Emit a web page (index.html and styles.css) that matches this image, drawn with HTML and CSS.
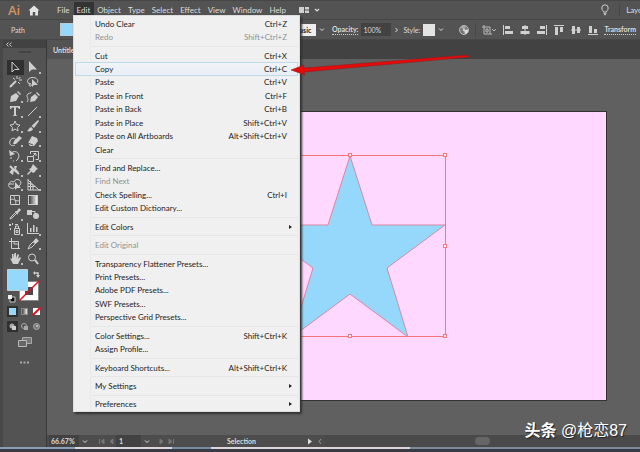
FILE: index.html
```html
<!DOCTYPE html>
<html lang="en">
  <head>
    <meta charset="UTF-8" />
    <meta name="viewport" content="width=device-width, initial-scale=1.0" />
    <title>Illustrator</title>
    <link rel="stylesheet" href="styles.css">
  </head>
  <body>
    <div class="app">
      <header class="titlebar">
        <span class="logo">Ai</span>
        <button class="home" aria-label="Home">
          <svg width="12" height="11" viewBox="0 0 12 11"><path d="M6 0.5L0.5 5.5H2V10.5H4.8V7H7.2V10.5H10V5.5H11.5Z" fill="#e4e4e4"/></svg>
        </button>
        <nav class="menubar">
          <button>File</button>
          <button class="open">Edit</button>
          <button>Object</button>
          <button>Type</button>
          <button>Select</button>
          <button>Effect</button>
          <button>View</button>
          <button>Window</button>
          <button>Help</button>
        </nav>
        <button class="arrange" aria-label="Arrange documents">
          <svg width="22" height="8" viewBox="0 0 22 8"><path d="M0 1H5V7H0ZM6 1H10V3.5H6ZM6 4.5H10V7H6Z" fill="#d0d0d0"/><path d="M16 3L18 5L20 3" fill="none" stroke="#ddd" stroke-width="1.2"/></svg>
        </button>
        <div class="title-right">
          <button aria-label="Learn">
            <svg width="10" height="12" viewBox="0 0 10 12"><path d="M3.5 8C3.5 6.7 1.8 6 1.8 4A3.2 3.2 0 0 1 8.2 4C8.2 6 6.5 6.7 6.5 8ZM3.5 9.3H6.5M4 10.7H6" fill="none" stroke="#ccc"/></svg>
          </button>
          <button class="layout">Layout</button>
        </div>
      </header>

      <section class="control">
        <span class="kind">Path</span>
        <button class="fill-color" aria-label="Fill"></button>
        <div class="options">
          <select class="brush" aria-label="Brush"><option>Basic</option></select>
          <svg class="chev" width="6" height="5" viewBox="0 0 6 5"><path d="M1 1.5L3 3.5L5 1.5"/></svg>
          <label class="link" for="opacity">Opacity:</label>
          <input id="opacity" value="100%">
          <svg class="chev right" width="5" height="6" viewBox="0 0 5 6"><path d="M1.5 1L3.5 3L1.5 5"/></svg>
          <span class="style-label">Style:</span>
          <button class="style-box" aria-label="Style"></button>
          <svg class="chev" width="6" height="5" viewBox="0 0 6 5"><path d="M1 1.5L3 3.5L5 1.5"/></svg>
        </div>
        <div class="align">
          <button aria-label="Recolor"><svg width="12" height="12" viewBox="0 0 12 12"><circle cx="6" cy="6" r="4.5" fill="#777" stroke="#bbb"/><path d="M6 6L2.5 3A4.5 4.5 0 0 1 8 2Z" fill="#aaa"/><path d="M6 6L10 5.5A4 4 0 0 1 7 10Z" fill="#ddd"/><circle cx="6" cy="6" r="1.2" fill="#ccc"/></svg></button>
          <i class="divider"></i>
          <button aria-label="Align to"><svg width="16" height="12" viewBox="0 0 16 12"><path d="M3 1V10H11M1 3H9V10M5 5H7V8H5Z" fill="none" stroke="#bbb"/><path d="M11 5L13 7L15 5" fill="none" stroke="#bbb"/></svg></button>
          <button aria-label="Align left"><svg width="12" height="12" viewBox="0 0 12 12"><path d="M1 1H2V11H1ZM3 2H8V5H3ZM3 7H11V10H3Z"/></svg></button>
          <button aria-label="Align center"><svg width="12" height="12" viewBox="0 0 12 12"><path d="M5.5 1H6.5V11H5.5ZM3 2H9V5H3ZM1.500 7H10.500V10H1.500Z"/></svg></button>
          <button aria-label="Align right"><svg width="12" height="12" viewBox="0 0 12 12"><path d="M10 1H11V11H10ZM4 2H9V5H4ZM1 7H9V10H1Z"/></svg></button>
          <button aria-label="Align top"><svg width="12" height="12" viewBox="0 0 12 12"><path d="M1 1H11V2H1ZM2 3H5V11H2ZM7 3H10V8H7Z"/></svg></button>
          <button aria-label="Align middle"><svg width="12" height="12" viewBox="0 0 12 12"><path d="M1 5.500H11V6.500H1ZM2 2H5V10H2ZM7 3H10V9H7Z"/></svg></button>
          <button aria-label="Align bottom"><svg width="12" height="12" viewBox="0 0 12 12"><path d="M1 10H11V11H1ZM2 2H5V9H2ZM7 5H10V9H7Z"/></svg></button>
          <button class="link">Transform</button>
        </div>
      </section>

      <main class="workspace">
        <aside class="tools">
          <div class="tools-head"><svg width="6" height="5" viewBox="0 0 6 5"><path d="M2.5 0.500L0.500 2.500L2.500 4.500M5.500 0.500L3.500 2.500L5.500 4.500" fill="none" stroke="#ccc"/></svg></div>
          <div class="grip"></div>
          <div class="tool-grid">
            <button class="active" aria-label="Selection"><svg viewBox="0 0 16 14"><path class="line" d="M5 2V12L7.500 9.500H12Z"/></svg></button>
            <button class="more" aria-label="Direct selection"><svg viewBox="0 0 16 14"><path d="M4 1V12L7 9.500H12Z"/></svg></button>
            <button aria-label="Magic wand"><svg viewBox="0 0 16 14"><path class="line bold" d="M3 12L9 6"/><path class="line" d="M10 1V4M12 5H15M11.500 4L13.500 2M6 3L8 4.500M11 7L13 9"/></svg></button>
            <button aria-label="Lasso"><svg viewBox="0 0 16 14"><path class="line" d="M5 9C1 8 2 3 7 2.500C12 2 14 6 12 8M5 9C3 10 5 12 6 11C7 9 4 7 4 9"/><path d="M7 4V12L9 10H13Z"/></svg></button>
            <button class="more" aria-label="Pen"><svg viewBox="0 0 16 14"><path d="M3 12L4 6L9 3L12 6L9 11ZM10 2L11 1L14 4L13 5Z"/></svg></button>
            <button aria-label="Curvature"><svg viewBox="0 0 16 14"><path d="M5 12L6 7L10 4L13 7L10 11ZM11 3L12 2L15 5L14 6Z"/><path class="line" d="M2 12C5 9 0 6 3 4S6 4 6 2"/></svg></button>
            <button class="more" aria-label="Type"><svg viewBox="0 0 16 14"><path d="M3 2H13V5H12L11 3.500H9V11L10.500 12H5.500L7 11V3.500H5L4 5H3Z"/></svg></button>
            <button class="more" aria-label="Line"><svg viewBox="0 0 16 14"><path class="line" d="M3 12L12 3"/></svg></button>
            <button class="more" aria-label="Star"><svg viewBox="0 0 16 14"><path class="line" d="M8 2L9.500 5.500L13 6L10.500 8.500L11 12L8 10L5 12L5.500 8.500L3 6L6.500 5.500Z"/></svg></button>
            <button class="more" aria-label="Paintbrush"><svg viewBox="0 0 16 14"><path d="M13 1L14 2L9 9L6.500 7ZM6 8L8 10C7 12 5 13 2 12C4 11 3.500 9 6 8Z"/></svg></button>
            <button class="more" aria-label="Shaper"><svg viewBox="0 0 16 14"><path class="line" d="M8 11C4 13 2 10 3 7S8 3 9 6"/><path d="M6 10L7 7L12 2L15 4L9 10Z"/></svg></button>
            <button class="more" aria-label="Eraser"><svg viewBox="0 0 16 14"><path d="M3 9L7 2L12 4L13 7L9 12L5 12Z"/><path d="M3 9L8 11" stroke="#535353"/></svg></button>
            <button class="more" aria-label="Rotate"><svg viewBox="0 0 16 14"><path class="line" d="M4 4C9 0 14 5 11 10L9 12M4 8V10M6 12H7"/><path d="M2 1L3 7L8 5Z"/></svg></button>
            <button class="more" aria-label="Scale"><svg viewBox="0 0 16 14"><path class="line" d="M2.500 7.500H8.500V12.500H2.500ZM5.500 5V2.500H13.500V10.500H10.500M8 7L11 4M8.500 4.500H11V7"/></svg></button>
            <button class="more" aria-label="Width"><svg viewBox="0 0 16 14"><path class="line bold" d="M3 3L6 6L4 9M6 6L12 11"/><path d="M2 9L7 7L6 12ZM7 3H10L9 6L12 9L8 8Z"/></svg></button>
            <button class="more" aria-label="Puppet warp"><svg viewBox="0 0 16 14"><path d="M8 1L13 6L11 7L10 9L8 10L6.500 8.500L3 12L2 11L5.500 7.500L4 6L6 5Z"/></svg></button>
            <button class="more" aria-label="Shape builder"><svg viewBox="0 0 16 14"><path class="line" d="M8 9A3.500 3.500 0 1 1 7 4A3.500 3.500 0 1 1 12 8M2 6H7"/><path d="M8 4V12L10 10H14Z"/></svg></button>
            <button class="more" aria-label="Perspective grid"><svg viewBox="0 0 16 14"><path class="line" d="M3 1V12H14L3 2M3 5L8 7V12M3 8.500H10M5.500 3V12"/></svg></button>
            <button aria-label="Mesh"><svg viewBox="0 0 16 14"><path class="line" d="M3.500 2.500H12.500V11.500H3.500ZM3 7C6 4 9 10 13 7M8 2C5 5 11 8 8 12"/></svg></button>
            <button aria-label="Gradient"><svg viewBox="0 0 16 14"><defs><linearGradient id="ramp"><stop stop-color="#333"/><stop offset="1" stop-color="#fff"/></linearGradient></defs><rect x="3.500" y="2.500" width="9" height="9" fill="url(#ramp)" stroke="#ccc"/></svg></button>
            <button class="more" aria-label="Eyedropper"><svg viewBox="0 0 16 14"><path class="line" d="M9 5L4 10L3 12L5 11L10 6"/><path d="M8 4L10 4L12 1L14 3L11 6L11 8Z"/></svg></button>
            <button aria-label="Blend"><svg viewBox="0 0 16 14"><path d="M2 3H7V8H2Z"/><circle cx="11" cy="9" r="3"/><path class="line" d="M6.500 4.500H10V7"/></svg></button>
            <button class="more" aria-label="Symbol sprayer"><svg viewBox="0 0 16 14"><path class="line" d="M7.500 6.500H12.500V12.500H7.500ZM8.500 6V4H11.500V6M9 8.500H11V10.500H9Z"/><path d="M2 2H4V4H2ZM5 1H6V3H5ZM3 6H4V8H3ZM8 2H11V3H8Z"/></svg></button>
            <button class="more" aria-label="Graph"><svg viewBox="0 0 16 14"><path d="M2 1H3V11H14V12H2ZM5 6H6.500V10H5ZM8 3H9.500V10H8ZM11 5H12.500V10H11Z"/></svg></button>
            <button aria-label="Artboard"><svg viewBox="0 0 16 14"><path class="line" d="M4.500 1V11.500H13M2 4.500H11.500V11M7 4V7H12"/></svg></button>
            <button class="more" aria-label="Slice"><svg viewBox="0 0 16 14"><path class="line" d="M3 12L5 8L11 2L13 4L7 10Z"/><path d="M8 5L11 1L14 4L10 7Z"/></svg></button>
            <button class="more" aria-label="Hand"><svg viewBox="0 0 16 14"><path d="M3 6L5 7L5 2H6.500V6L7.500 1H9L9 6L10.500 2L12 3L11 7L13 5L14 6L11 12H6Z"/></svg></button>
            <button aria-label="Zoom"><svg viewBox="0 0 16 14"><circle class="line" cx="7" cy="5.500" r="3.500"/><path class="line bold" d="M10 8L13 12"/></svg></button>
          </div>
          <svg class="swatches" width="36" height="36" viewBox="0 0 36 36">
            <path d="M27 5H31V8" fill="none" stroke="#ccc" stroke-width="1.500"/><path d="M29 7H33L31 10ZM28 3V7L26 5Z" fill="#ccc"/>
            <path d="M12.500 13.500H31.500V32.500H12.500Z" fill="#fff" stroke="#888"/><path d="M18 19H26V27H18Z" fill="#484848"/>
            <path d="M12 33L32 13" stroke="#e01020" stroke-width="1.500"/>
            <path d="M0.500 1.500H20.500V22.500H0.500Z" fill="#96d8fc" stroke="#c2cdd4"/>
            <path d="M3 29H8V34H3Z" fill="#111" stroke="#ccc"/><path d="M1 27H5V31H1Z" fill="#eee"/>
          </svg>
          <div class="modes">
            <button class="active" aria-label="Color"><svg width="9" height="9" viewBox="0 0 9 9"><rect x="1" y="1" width="7" height="7" fill="#96d8fc"/></svg></button>
            <button aria-label="Gradient"><svg width="9" height="9" viewBox="0 0 9 9"><rect x="1.500" y="1.500" width="6" height="6" fill="url(#ramp)" stroke="#888"/></svg></button>
            <button aria-label="None"><svg width="9" height="9" viewBox="0 0 9 9"><path d="M1 1H8V8H1Z" fill="#fff"/><path d="M0.500 8.500L8.500 0.500" stroke="#e01020" stroke-width="2"/></svg></button>
            <button class="active" aria-label="Draw normal"><svg width="9" height="9" viewBox="0 0 9 9"><circle cx="4" cy="4" r="2.500" fill="#aaa"/><path d="M4 4H8V8H4Z" fill="#ccc"/></svg></button>
            <button aria-label="Draw behind"><svg width="9" height="9" viewBox="0 0 9 9"><circle cx="4" cy="4" r="2.500" fill="none" stroke="#aaa"/><path d="M4 4H8V8H4Z" fill="#aaa"/></svg></button>
            <button aria-label="Draw inside"><svg width="9" height="9" viewBox="0 0 9 9"><circle cx="4.500" cy="4.500" r="3" fill="#777" stroke="#aaa"/><path d="M4 3H6V5H4Z" fill="#bbb"/></svg></button>
          </div>
          <button class="screen-mode" aria-label="Screen mode"><svg width="16" height="12" viewBox="0 0 16 12"><path d="M5.500 1.500H14.500V7.500H5.500Z" fill="#777" stroke="#aaa"/><path d="M1.500 4.500H9.500V10.500H1.500Z" fill="#666" stroke="#bbb"/></svg></button>
          <button class="edit-tools" aria-label="Edit toolbar"><svg width="9" height="3" viewBox="0 0 9 3"><path d="M0 0.500H2V2.500H0ZM3.500 0.500H5.500V2.500H3.500ZM7 0.500H9V2.500H7Z" fill="#aaa"/></svg></button>
        </aside>

        <div class="document">
          <div class="tabs"><button class="tab">Untitled</button></div>
          <div class="canvas">
            <svg class="artboard" viewBox="47 59 593 376" preserveAspectRatio="xMinYMin meet">
              <rect x="92.500" y="111.500" width="514" height="289" fill="#fed8fe" stroke="#333"/>
              <path d="M350 156L372 225H445L387 268L408 337L350 294L292 337L313 268L255 225H328Z" fill="#96d8fc" stroke="#d8899f"/>
              <path d="M254.500 155.500H445.500V336.500H254.500Z" fill="none" stroke="#f9747c"/>
              <g fill="#fff" stroke="#f9747c">
                <rect x="348.500" y="153.500" width="3" height="3"/><rect x="443.500" y="153.500" width="3" height="3"/>
                <rect x="443.500" y="244.500" width="3" height="3"/><rect x="443.500" y="334.500" width="3" height="3"/>
                <rect x="348.500" y="334.500" width="3" height="3"/>
              </g>
            </svg>
          </div>
          <footer class="status">
            <select class="zoom" aria-label="Zoom"><option>66.67%</option></select>
            <svg class="chev" width="6" height="5" viewBox="0 0 6 5"><path d="M1 1.500L3 3.500L5 1.500"/></svg>
            <svg class="pager" width="16" height="7" viewBox="0 0 16 7"><path d="M1.500 1V6M6 1L3 3.500L6 6ZM15 1L12 3.500L15 6Z"/></svg>
            <input class="page" value="1" aria-label="Artboard">
            <svg class="chev" width="6" height="5" viewBox="0 0 6 5"><path d="M1 1.500L3 3.500L5 1.500"/></svg>
            <svg class="pager" width="16" height="7" viewBox="0 0 16 7"><path d="M1 1L4 3.500L1 6ZM10 1L13 3.500L10 6ZM14.500 1V6"/></svg>
            <span class="tool-name">Selection</span>
            <svg width="16" height="7" viewBox="0 0 16 7"><path d="M1 0.500L5 3.500L1 6.500Z" fill="#ddd"/><path d="M14 1L12 3.500L14 6" fill="none" stroke="#999"/></svg>
            <div class="scrollbar"><span class="thumb"></span></div>
          </footer>
        </div>
      </main>
      <div class="taskbar"></div>

      <ul class="dropdown">
        <li><button>Undo Clear<kbd>Ctrl+Z</kbd></button></li>
        <li><button disabled>Redo<kbd>Shift+Ctrl+Z</kbd></button></li>
        <li class="sep"></li>
        <li><button>Cut<kbd>Ctrl+X</kbd></button></li>
        <li><button class="hover">Copy<kbd>Ctrl+C</kbd></button></li>
        <li><button>Paste<kbd>Ctrl+V</kbd></button></li>
        <li><button>Paste in Front<kbd>Ctrl+F</kbd></button></li>
        <li><button>Paste in Back<kbd>Ctrl+B</kbd></button></li>
        <li><button>Paste in Place<kbd>Shift+Ctrl+V</kbd></button></li>
        <li><button>Paste on All Artboards<kbd>Alt+Shift+Ctrl+V</kbd></button></li>
        <li><button>Clear</button></li>
        <li class="sep"></li>
        <li><button>Find and Replace...</button></li>
        <li><button disabled>Find Next</button></li>
        <li><button>Check Spelling...<kbd>Ctrl+I</kbd></button></li>
        <li><button>Edit Custom Dictionary...</button></li>
        <li class="sep"></li>
        <li><button class="sub">Edit Colors</button></li>
        <li class="sep"></li>
        <li><button disabled>Edit Original</button></li>
        <li class="sep"></li>
        <li><button>Transparency Flattener Presets...</button></li>
        <li><button>Print Presets...</button></li>
        <li><button>Adobe PDF Presets...</button></li>
        <li><button>SWF Presets...</button></li>
        <li><button>Perspective Grid Presets...</button></li>
        <li class="sep"></li>
        <li><button>Color Settings...<kbd>Shift+Ctrl+K</kbd></button></li>
        <li><button>Assign Profile...</button></li>
        <li class="sep"></li>
        <li><button>Keyboard Shortcuts...<kbd>Alt+Shift+Ctrl+K</kbd></button></li>
        <li class="sep"></li>
        <li><button class="sub">My Settings</button></li>
        <li class="sep"></li>
        <li><button class="sub">Preferences</button></li>
      </ul>

      <svg class="pointer" width="178" height="22" viewBox="0 0 178 22"><path d="M13 14L176 1L178 3L13 18L14 21L0 16L13 11Z" fill="#e50b0b" stroke="#8c1a1a" stroke-width="0.500"/></svg>
      <div class="watermark"><b>头条</b> @枪恋87</div>
    </div>
  </body>
</html>
```
FILE: styles.css
```css
* {
  box-sizing: border-box;
}
body {
  margin: 0;
  background-color: #535353;
  color: #dcdcdc;
  font-family: Lato, "Open Sans", sans-serif;
  font-size: 8px;
  line-height: 12px;
}
button,
input,
select {
  margin: 0;
  padding: 0;
  border: 0;
  border-radius: 0;
  background: none;
  color: inherit;
  font: inherit;
  appearance: none;
}
svg {
  display: block;
}
.app {
  position: relative;
  display: flex;
  flex-direction: column;
  height: 100vh;
  overflow: hidden;
}

/* title bar */
.titlebar {
  display: flex;
  align-items: center;
  flex: 0 0 20px;
  padding-left: 8px;
  border-top: 1px solid #474747;
  border-bottom: 1px solid #464646;
  overflow: hidden;
}
.logo {
  width: 20px;
  color: #d8925c;
  font-family: "Open Sans", sans-serif;
  font-size: 13px;
  font-weight: 600;
}
.home {
  margin-right: 14px;
}
.menubar {
  display: flex;
}
.menubar button {
  padding: 2px 4px 2px 3px;
}
.menubar .open {
  background-color: #333;
}
.arrange {
  margin-left: 9px;
}
.title-right {
  display: flex;
  align-items: center;
  gap: 9px;
  margin-left: auto;
  margin-right: -10px;
}
.layout {
  padding-left: 6px;
  border-left: 1px solid #474747;
}

/* control bar */
.control {
  display: flex;
  align-items: center;
  flex: 0 0 20px;
  padding: 0 4px 0 11px;
  border-bottom: 1px solid #474747;
  font-size: 7px;
}
.kind {
  width: 49px;
}
.fill-color {
  width: 13px;
  height: 13px;
  border: 1px solid #b4ccd8;
  background-color: #96d8fc;
}
.options {
  display: flex;
  align-items: center;
  gap: 3px;
  margin-left: 220px;
}
.brush {
  width: 23px;
  height: 12px;
  padding-left: 2px;
  background-color: #eee;
  color: #222;
  font-weight: 700;
}
.chev {
  fill: none;
  stroke: #ddd;
}
.link {
  font-weight: 700;
  line-height: 9px;
  border-bottom: 1px dotted #ccc;
}
.options .link {
  margin-left: 4px;
}
#opacity {
  width: 30px;
  height: 13px;
  padding-left: 2px;
  background-color: #424242;
}
.style-label {
  margin-left: 1px;
}
.style-box {
  width: 12px;
  height: 12px;
  background-color: #e4e4e4;
}
.align {
  display: flex;
  align-items: center;
  gap: 5px;
  margin-left: auto;
  fill: #d0d0d0;
}
.divider {
  width: 1px;
  height: 14px;
  background-color: #484848;
}

/* tools */
.workspace {
  display: flex;
  flex: 1;
  min-height: 0;
}
.tools {
  flex: 0 0 47px;
  border-left: 3px solid #484848;
  border-right: 1px solid #383838;
}
.tools-head {
  height: 8px;
  padding: 2px 3px;
  background-color: #424242;
}
.grip {
  width: 12px;
  height: 2px;
  margin: 3px auto 7px;
  background-color: #444;
}
.tool-grid {
  display: grid;
  grid-template-columns: 17px 17px;
  grid-template-rows: repeat(14, 1fr);
  column-gap: 1px;
  height: 206px;
  margin-left: 4px;
}
.tool-grid button {
  position: relative;
  min-height: 0;
}
.tool-grid svg {
  width: 16px;
  height: 14px;
  fill: #cfcfcf;
}
.tool-grid .line {
  fill: none;
  stroke: #cfcfcf;
}
.tool-grid .bold {
  stroke-width: 2;
}
.tool-grid .active,
.modes .active {
  background-color: #303030;
}
.more::after {
  content: "";
  position: absolute;
  right: 1px;
  bottom: 1px;
  width: 2px;
  height: 2px;
  background-color: #bbb;
}
.swatches {
  margin: 2px 0 2px 4px;
}
.modes {
  display: grid;
  grid-template-columns: repeat(3, 11px);
  gap: 4px 1px;
  margin-left: 4px;
}
.modes button {
  padding: 1px;
}
.screen-mode,
.edit-tools {
  display: block;
  margin: 4px auto 0;
}
.edit-tools {
  margin-top: 13px;
}

/* document */
.document {
  display: flex;
  flex-direction: column;
  flex: 1;
  min-width: 0;
}
.tabs {
  flex: 0 0 19px;
  background-color: #424242;
}
.tab {
  width: 50px;
  height: 19px;
  padding-left: 6px;
  background-color: #535353;
  text-align: left;
  font-size: 7px;
  font-weight: 700;
}
.canvas {
  flex: 1;
  min-height: 0;
  background-color: #606060;
}
.artboard {
  width: 100%;
  height: 100%;
}
.status {
  display: flex;
  align-items: center;
  flex: 0 0 12px;
  padding-left: 2px;
  background-color: #4d4d4d;
  font-size: 7px;
}
.zoom,
.page {
  width: 30px;
  height: 12px;
  padding-left: 2px;
  background-color: #424242;
  font-weight: 700;
}
.zoom + .chev {
  margin: 0 10px 0 3px;
}
.pager {
  fill: #777;
  stroke: #777;
}
.page {
  width: 25px;
  margin: 0 3px 0 2px;
  padding-left: 3px;
}
.page + .chev {
  margin-right: 9px;
}
.tool-name {
  width: 132px;
  padding-left: 52px;
  font-weight: 700;
}
.scrollbar {
  flex: 1;
  height: 12px;
  margin-left: 2px;
  padding: 2px 0;
  background-color: #4a4a4a;
}
.thumb {
  display: block;
  width: 15px;
  height: 8px;
  margin: 0 auto;
  border-radius: 4px;
  background-color: #666;
}
.taskbar {
  flex: 0 0 5px;
  border-top: 2px solid #8b97a6;
  border-image: linear-gradient(90deg, #8ba0b8 12%, #ddd5dc 12%, #ddd5dc 27%, #788ba2 27%, #788ba2 33%, #ddd5dc 33%, #ddd5dc 64%, #7d8998 64%) 2;
  background-color: #393b44;
}

/* edit menu */
.dropdown {
  position: absolute;
  top: 15px;
  left: 73px;
  display: flex;
  flex-direction: column;
  width: 227px;
  height: 397px;
  margin: 0;
  padding: 1px 1px 0;
  border: 1px solid #ddd;
  background: linear-gradient(90deg, #f0f0f0 16px, #e9e9e9 16px, #e9e9e9 17px, #f0f0f0 17px);
  box-shadow: 2px 2px 2px #333;
  list-style: none;
  color: #1c1c1c;
}
.dropdown li {
  display: flex;
  flex: 27 1 0;
  min-height: 0;
}
.dropdown .sep {
  flex: 10 1 0;
  align-items: center;
}
.sep::after {
  content: "";
  flex: 1;
  height: 1px;
  margin-left: 17px;
  background-color: #e6e6e6;
}
.dropdown button {
  display: flex;
  align-items: center;
  justify-content: space-between;
  width: 100%;
  padding: 0 11px 0 20px;
}
.dropdown button:disabled {
  color: #929292;
}
.dropdown .hover {
  background: linear-gradient(#f1f4f8, #e8eef6);
  box-shadow: inset 0 0 0 1px #bfdbea;
}
.dropdown kbd {
  font: inherit;
}
.dropdown .sub {
  padding-right: 6px;
}
.sub::after {
  content: "";
  border: 2px solid transparent;
  border-left: 3px solid #222;
  border-right: 0;
}

.pointer {
  position: absolute;
  top: 54px;
  left: 291px;
}
.watermark {
  position: absolute;
  right: 13px;
  bottom: 11px;
  color: #fff;
  font-family: "Liberation Sans", "Noto Sans CJK SC", sans-serif;
  font-size: 16px;
  line-height: 20px;
  text-shadow: 1px 1px 1px #222;
}
```
